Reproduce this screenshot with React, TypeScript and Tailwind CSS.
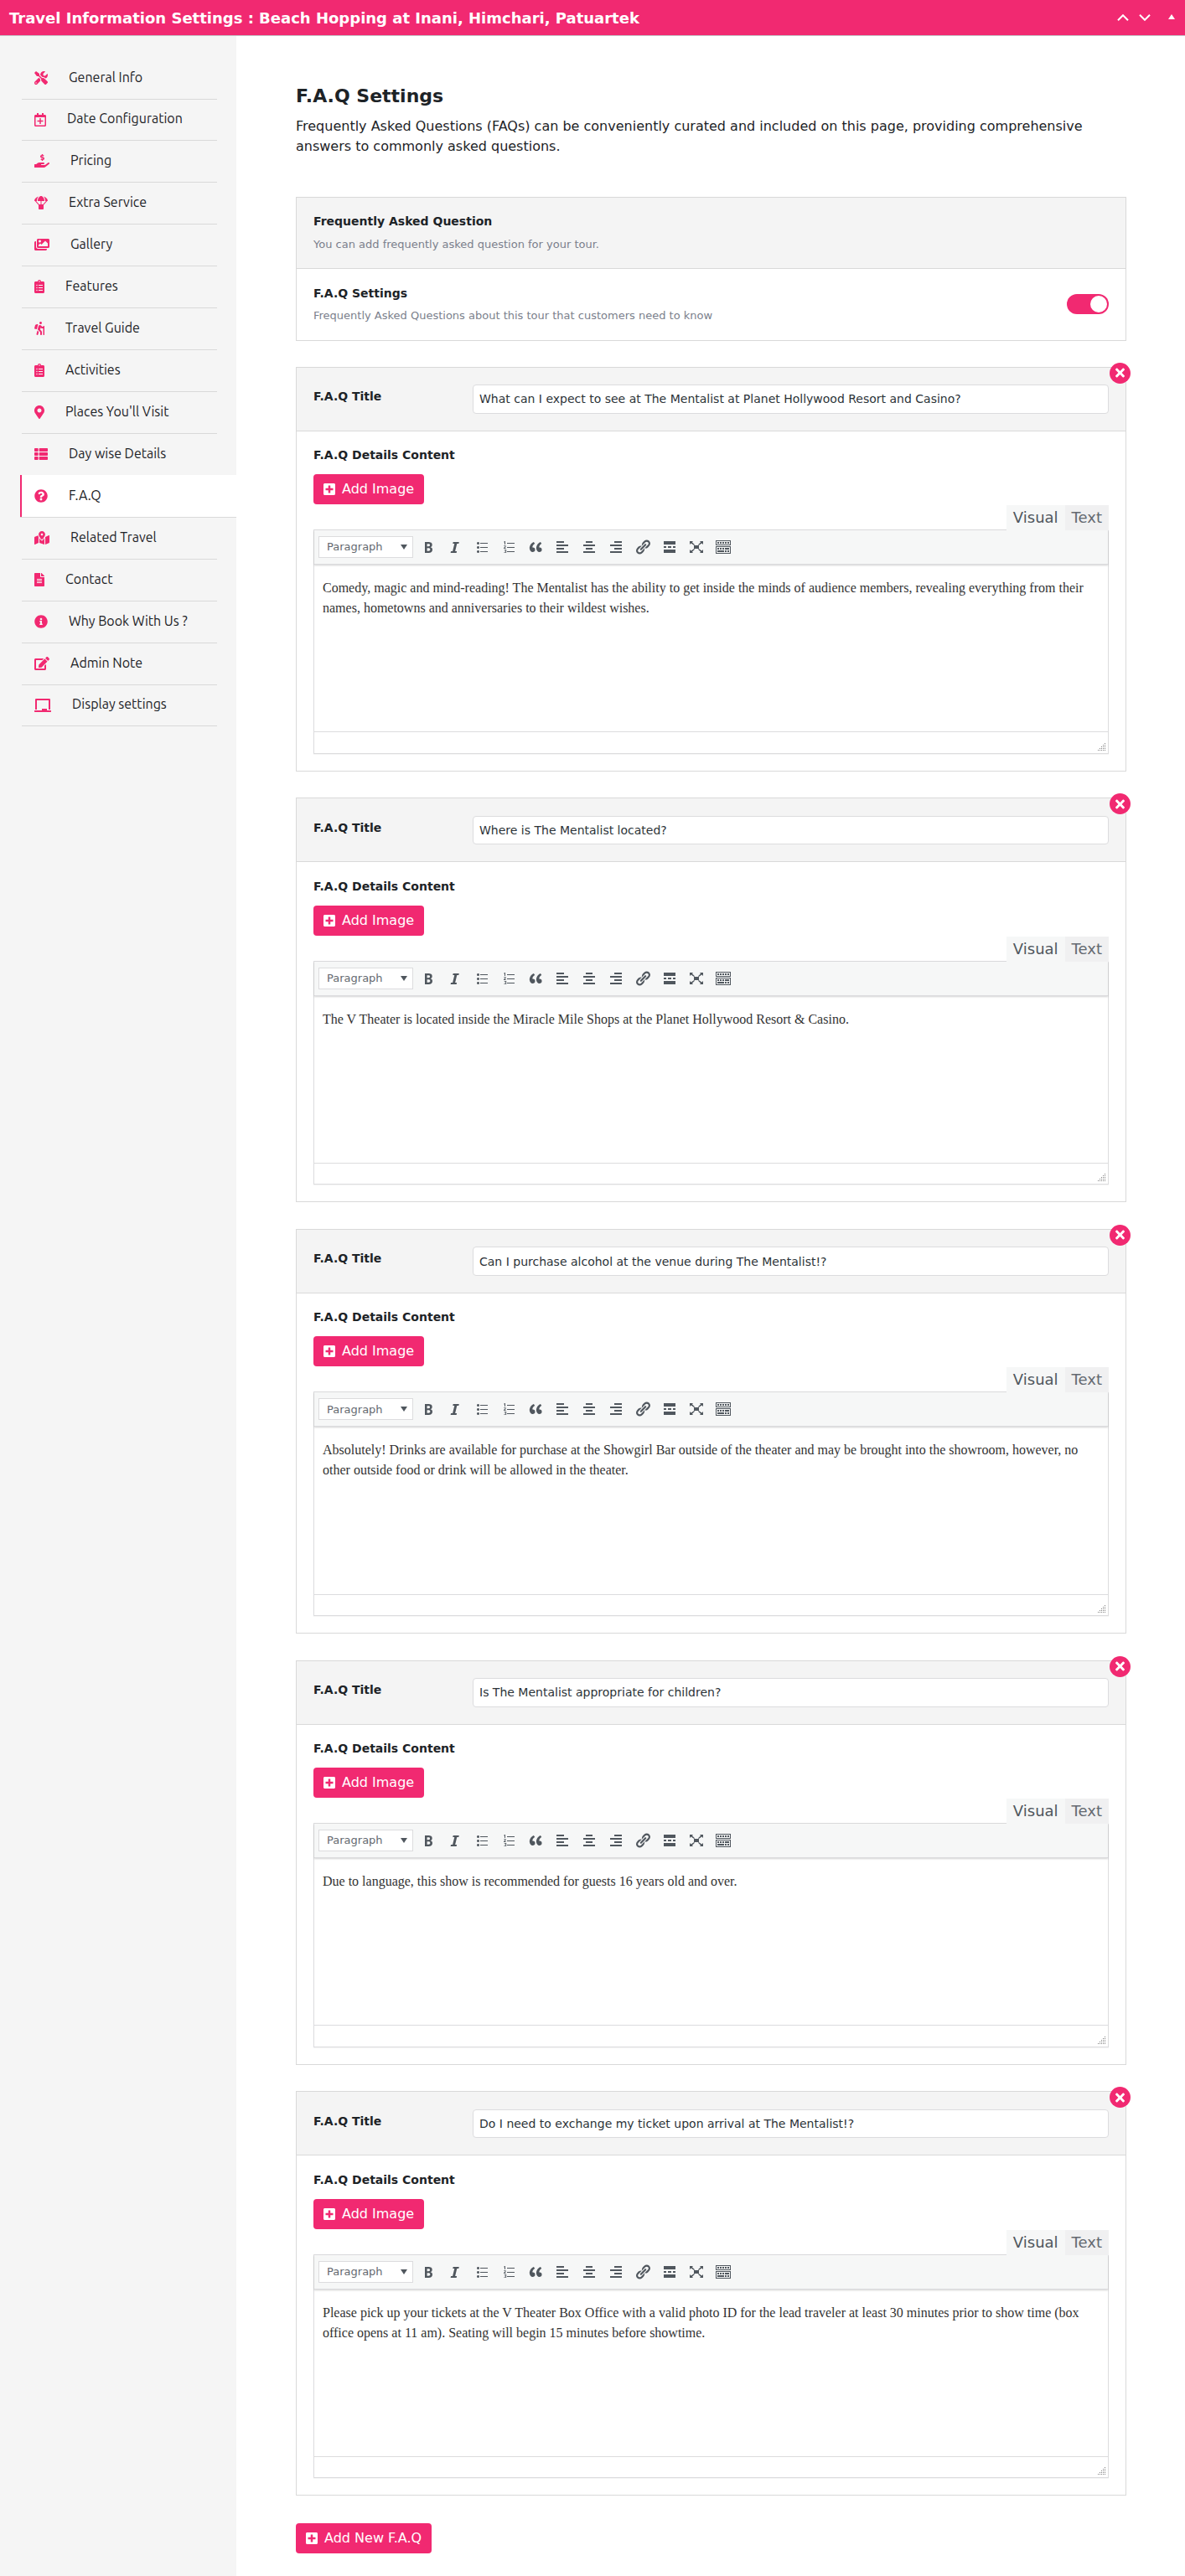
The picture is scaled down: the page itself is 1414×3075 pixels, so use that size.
import type { ReactNode } from "react";
import type { IconType } from "react-icons";
import {
  FaTools, FaRegCalendarPlus, FaHandHoldingUsd, FaParachuteBox, FaImages, FaClipboardList,
  FaHiking, FaMapMarkerAlt, FaThList, FaQuestionCircle, FaMapMarkedAlt, FaFileAlt,
  FaInfoCircle, FaEdit, FaChalkboard, FaPlusSquare, FaTimes,
} from "react-icons/fa";

type Item = { icon: IconType; label: string; w: string; short?: boolean };

const items: Item[] = [
  { icon: FaTools, label: "General Info", w: "w-4" },
  { icon: FaRegCalendarPlus, label: "Date Configuration", w: "w-3.5", short: true },
  { icon: FaHandHoldingUsd, label: "Pricing", w: "w-[18px]" },
  { icon: FaParachuteBox, label: "Extra Service", w: "w-4" },
  { icon: FaImages, label: "Gallery", w: "w-[18px]" },
  { icon: FaClipboardList, label: "Features", w: "w-3" },
  { icon: FaHiking, label: "Travel Guide", w: "w-3" },
  { icon: FaClipboardList, label: "Activities", w: "w-3" },
  { icon: FaMapMarkerAlt, label: "Places You'll Visit", w: "w-3" },
  { icon: FaThList, label: "Day wise Details", w: "w-4" },
  { icon: FaQuestionCircle, label: "F.A.Q", w: "w-4" },
  { icon: FaMapMarkedAlt, label: "Related Travel", w: "w-[18px]" },
  { icon: FaFileAlt, label: "Contact", w: "w-3" },
  { icon: FaInfoCircle, label: "Why Book With Us ?", w: "w-4" },
  { icon: FaEdit, label: "Admin Note", w: "w-[18px]" },
  { icon: FaChalkboard, label: "Display settings", w: "w-5", short: true },
];

const faqs = [
  {
    title: "What can I expect to see at The Mentalist at Planet Hollywood Resort and Casino?",
    body: "Comedy, magic and mind-reading! The Mentalist has the ability to get inside the minds of audience members, revealing everything from their names, hometowns and anniversaries to their wildest wishes.",
  },
  {
    title: "Where is The Mentalist located?",
    body: "The V Theater is located inside the Miracle Mile Shops at the Planet Hollywood Resort & Casino.",
  },
  {
    title: "Can I purchase alcohol at the venue during The Mentalist!?",
    body: "Absolutely! Drinks are available for purchase at the Showgirl Bar outside of the theater and may be brought into the showroom, however, no other outside food or drink will be allowed in the theater.",
  },
  {
    title: "Is The Mentalist appropriate for children?",
    body: "Due to language, this show is recommended for guests 16 years old and over.",
  },
  {
    title: "Do I need to exchange my ticket upon arrival at The Mentalist!?",
    body: "Please pick up your tickets at the V Theater Box Office with a valid photo ID for the lead traveler at least 30 minutes prior to show time (box office opens at 11 am). Seating will begin 15 minutes before showtime.",
  },
];

function Sidebar() {
  return (
    <nav className="w-[282px] shrink-0 bg-[#f5f5f5] pt-[26px] pl-6 font-['Ubuntu','Noto_Sans',sans-serif] text-[#1d2327]">
      {items.map((it, i) => {
        const active = it.label === "F.A.Q";
        const Icon = it.icon;
        return (
          <div
            key={i}
            className={
              "flex items-start border-b border-[#d9d9d9] " +
              (active
                ? "relative -mt-px h-[51px] bg-white pl-[17px] pt-px"
                : it.short
                  ? "ml-0.5 mr-[23px] h-[49px] pl-[15px]"
                  : "ml-0.5 mr-[23px] h-[50px] pl-[15px]")
            }
          >
            {active && <span className="absolute left-0 top-0 h-[50px] w-0.5 bg-[#f12971]" />}
            <Icon className={"mt-4 h-4 shrink-0 text-[#f12971] " + it.w} />
            <span className={"ml-[25px] whitespace-nowrap text-base leading-6 " + (it.short ? "mt-2.5" : "mt-[11px]")}>
              {it.label}
            </span>
          </div>
        );
      })}
    </nav>
  );
}

function Tool({ children }: { children: ReactNode }) {
  return (
    <span className="mr-3 flex h-5 w-5 shrink-0 items-center justify-center">
      <svg viewBox="0 0 20 20" className="h-5 w-5 fill-[#50575e]">{children}</svg>
    </span>
  );
}

function Toolbar() {
  return (
    <div className="relative flex h-[41px] items-center border-b border-[#dcdcde] bg-[#f6f7f7] pl-[5px] shadow-[0_1px_2px_rgba(0,0,0,0.18)]">
      <div className="mr-2 flex h-[26px] w-[113px] shrink-0 items-center justify-between border border-[#dcdcde] bg-white pl-[9px] pr-[6px] text-[13px] text-[#646970]">
        Paragraph
        <svg viewBox="0 0 8 6" className="h-1.5 w-2 fill-[#50575e]"><path d="M0 0h8L4 6z" /></svg>
      </div>
      <Tool><path d="M6 4v13h4.54c1.37 0 2.46-.33 3.26-1 .8-.66 1.2-1.58 1.2-2.77 0-.84-.17-1.51-.51-2.01s-.9-.85-1.67-1.03v-.09c.57-.1 1.02-.4 1.36-.9s.51-1.13.51-1.91c0-1.14-.39-1.98-1.17-2.5C12.75 4.26 11.5 4 9.78 4H6zm2.57 5.15V6.26h1.36c.73 0 1.27.11 1.61.32.34.22.51.58.51 1.07 0 .54-.16.92-.47 1.15s-.82.35-1.51.35h-1.5zm0 2.19h1.6c1.44 0 2.16.53 2.16 1.61 0 .6-.17 1.05-.51 1.34s-.86.43-1.57.43H8.57v-3.38z" /></Tool>
      <Tool><path d="M14.78 4l-.47 2h-2.020l-2.180 9h2.020l-.47 2H4.600l.47-2h2.020l2.180-9H7.250l.47-2z" /></Tool>
      <Tool><path d="M5.5 7C4.67 7 4 6.33 4 5.5 4 4.68 4.67 4 5.5 4 6.32 4 7 4.68 7 5.5 7 6.33 6.32 7 5.5 7zM8 5h9v1H8V5zm-2.500 7c-.83 0-1.500-.67-1.500-1.500C4 9.680 4.670 9 5.500 9c.82 0 1.500.68 1.500 1.500 0 .83-.68 1.500-1.500 1.500zM8 10h9v1H8v-1zm-2.500 7c-.83 0-1.500-.67-1.500-1.500 0-.82.67-1.500 1.500-1.500.82 0 1.500.68 1.500 1.500 0 .83-.68 1.500-1.500 1.500zM8 15h9v1H8v-1z" /></Tool>
      <Tool><path d="M6 7V3h-.69L4 4.020l.4.510.46-.37.18-.16v3H6zm2-2h9v1H8V5zM4 8.600l.35.45c.4-.32.7-.4.95-.4.3 0 .45.15.45.4 0 .4-.4.8-1.650 1.950V12h2.700v-.7H5.200c.9-.8 1.500-1.400 1.500-2.200 0-.7-.5-1.100-1.300-1.100-.5 0-.95.15-1.400.6zM8 10h9v1H8v-1zm-1.400 5c.5-.15.8-.5.8-.95 0-.65-.5-1.050-1.400-1.050-.6 0-1.050.15-1.450.4l.35.6c.3-.2.65-.3.95-.3s.5.15.5.45c0 .35-.3.5-.9.5h-.4v.65h.4c.7 0 1 .15 1 .55 0 .35-.3.55-.8.55-.4 0-.8-.1-1.200-.3v.7c.35.15.8.25 1.300.25 1 0 1.600-.45 1.600-1.150 0-.5-.3-.8-.8-.9zM8 15h9v1H8v-1z" /></Tool>
      <Tool><path d="M9.490 13.220c0-.74-.2-1.380-.61-1.900-.62-.78-1.830-.88-2.530-.72-.29-1.650 1.110-3.750 2.920-4.650L7.880 4c-2.730 1.300-5.420 4.280-4.960 8.050C3.210 14.430 4.590 16 6.540 16c.85 0 1.560-.25 2.120-.75s.83-1.180.83-2.030zm8.050 0c0-.74-.2-1.380-.61-1.900-.63-.78-1.830-.88-2.530-.72-.29-1.650 1.110-3.750 2.920-4.650L15.930 4c-2.730 1.300-5.410 4.280-4.950 8.050.29 2.380 1.660 3.950 3.610 3.950.85 0 1.560-.25 2.120-.75s.83-1.180.83-2.030z" /></Tool>
      <Tool><path d="M12 5V3H3v2h9zm5 4V7H3v2h14zm-5 4v-2H3v2h9zm5 4v-2H3v2h14z" /></Tool>
      <Tool><path d="M14 5V3H6v2h8zm3 4V7H3v2h14zm-3 4v-2H6v2h8zm3 4v-2H3v2h14z" /></Tool>
      <Tool><path d="M17 5V3H8v2h9zm0 4V7H3v2h14zm0 4v-2H8v2h9zm0 4v-2H3v2h14z" /></Tool>
      <Tool><path d="M17.740 2.760c1.680 1.690 1.680 4.410 0 6.100l-1.530 1.520c-1.120 1.120-2.700 1.470-4.140 1.090l2.620-2.610.76-.77.76-.76c.84-.84.84-2.200 0-3.040-.84-.85-2.200-.85-3.040 0l-.77.76-3.380 3.380c-.37-1.440-.02-3.020 1.100-4.140l1.520-1.530c1.690-1.680 4.420-1.680 6.100 0zM8.590 13.430l5.340-5.340c.42-.42.42-1.100 0-1.520-.44-.43-1.130-.39-1.530 0l-5.330 5.340c-.42.42-.42 1.100 0 1.520.44.43 1.130.39 1.520 0zm-.76 2.290l4.140-4.150c.38 1.440.03 3.020-1.090 4.140l-1.520 1.530c-1.690 1.680-4.410 1.680-6.100 0-1.680-1.680-1.680-4.420 0-6.100l1.530-1.520c1.120-1.120 2.700-1.470 4.140-1.100l-4.140 4.150c-.85.84-.85 2.200 0 3.050.84.84 2.200.84 3.040 0z" /></Tool>
      <Tool><path d="M17 7V3H3v4h14zM6 11V9H3v2h3zm6 0V9H8v2h4zm5 0V9h-3v2h3zm0 6v-4H3v4h14z" /></Tool>
      <Tool><path d="M7 8h6v4H7zM2 3h4L4.900 4.200 8 7.200l-.8.8L3.600 5.400 2 7zM18 3h-4l1.100 1.200L12 7.200l.8.8 3.600-2.600L18 7zM2 17h4l-1.100-1.200L8 12.800l-.8-.8-3.600 2.600L2 13zM18 17h-4l1.100-1.200-3.100-3 .8-.8 3.600 2.600L18 13z" /></Tool>
      <Tool><path d="M19 2v6H1V2h18zm-1 5V3H2v4h16zM5 4v2H3V4h2zm3 0v2H6V4h2zm3 0v2H9V4h2zm3 0v2h-2V4h2zm3 0v2h-2V4h2zm2 5v9H1V9h18zm-1 8v-7H2v7h16zM5 11v2H3v-2h2zm3 0v2H6v-2h2zm3 0v2H9v-2h2zm6 0v2h-5v-2h5zm-6 3v2H3v-2h8zm3 0v2h-2v-2h2zm3 0v2h-2v-2h2z" /></Tool>
    </div>
  );
}

function AddButton({ label, width }: { label: string; width: string }) {
  return (
    <button className={"flex h-9 items-center rounded bg-[#f12971] pl-3 text-base text-white " + width}>
      <FaPlusSquare className="mr-2 h-4 w-3.5 shrink-0" />
      <span className="whitespace-nowrap">{label}</span>
    </button>
  );
}

function FaqPanel({ title, body }: { title: string; body: string }) {
  return (
    <section className="relative mb-[31.7px] h-[483px] border border-[#d9d9d9]">
      <button className="absolute -right-[6px] -top-[6px] flex h-[25px] w-[25px] items-center justify-center rounded-full bg-[#f12971]">
        <FaTimes className="h-4 w-[11px] text-white" />
      </button>
      <div className="flex h-[76px] border-b border-[#d9d9d9] bg-[#f4f4f4] pl-5 pr-5">
        <label className="w-[190px] shrink-0 pt-[24.5px] text-sm font-bold leading-5">F.A.Q Title</label>
        <div className="mt-[20.4px] flex h-[34.6px] flex-1 items-center rounded border border-[#dcdcde] bg-white pl-[7px] text-sm text-[#2c3338]">
          {title}
        </div>
      </div>
      <div className="px-5 pt-[18.5px]">
        <h3 className="text-sm font-bold leading-5">F.A.Q Details Content</h3>
        <div className="mt-[13px] h-[37px]"><AddButton label="Add Image" width="w-[132px]" /></div>
        <div className="relative z-10 flex h-[30px] justify-end text-lg leading-[29px]">
          <span className="h-[30px] bg-[#f6f7f7] px-2 text-[#50575e]">Visual</span>
          <span className="h-[30px] bg-[#f0f0f1] px-2 text-[#646970]">Text</span>
        </div>
        <div className="-mt-px h-[267.5px] border border-[#dcdcde] shadow-[0_1px_1px_rgba(0,0,0,0.04)]">
          <Toolbar />
          <div className="h-[199.1px] px-2.5 pt-4 font-['Liberation_Serif',serif] text-base leading-6 text-[#333]">
            {body}
          </div>
          <div className="flex h-[25.4px] items-end justify-end border-t border-[#dcdcde] pb-0.5 pr-0.5">
            <svg viewBox="0 0 10 10" className="h-2.5 w-2.5 fill-[#808080]">
              <path d="M8 0h1v1H8zM6 2h1v1H6zM8 2h1v1H8zM4 4h1v1H4zM6 4h1v1H6zM8 4h1v1H8zM2 6h1v1H2zM4 6h1v1H4zM6 6h1v1H6zM8 6h1v1H8zM0 8h1v1H0zM2 8h1v1H2zM4 8h1v1H4zM6 8h1v1H6zM8 8h1v1H8z" />
            </svg>
          </div>
        </div>
      </div>
    </section>
  );
}

export default function App() {
  return (
    <div className="flex h-[3075px] w-[1414px] flex-col overflow-hidden bg-white font-['DejaVu_Sans',sans-serif] text-[#1d2327]">
      <header className="flex h-[43px] shrink-0 items-center border-b border-[#c3c4c7] bg-[#f12971] pl-[11px] pr-3 text-white">
        <h1 className="flex-1 pt-0.5 text-lg font-bold">Travel Information Settings : Beach Hopping at Inani, Himchari, Patuartek</h1>
        <svg viewBox="0 0 14 8" className="mr-3 h-2 w-3.5 fill-none stroke-white stroke-2"><path d="M1 7.200l6-6 6 6" /></svg>
        <svg viewBox="0 0 14 8" className="mr-[21px] h-2 w-3.5 fill-none stroke-white stroke-2"><path d="M1 .8l6 6 6-6" /></svg>
        <svg viewBox="0 0 8 6" className="mb-0.5 h-1.5 w-2 fill-white"><path d="M0 6h8L4 0z" /></svg>
      </header>
      <div className="flex flex-1">
        <Sidebar />
        <main className="flex-1 pl-[71px] pr-[70px] pt-[58px]">
          <h2 className="text-[22px] font-bold leading-7">F.A.Q Settings</h2>
          <p className="mt-2.5 text-base leading-6">
            Frequently Asked Questions (FAQs) can be conveniently curated and included on this page, providing comprehensive answers to commonly asked questions.
          </p>
          <section className="mt-12 mb-[30.6px] h-[172px] border border-[#d9d9d9]">
            <div className="h-[85px] border-b border-[#d9d9d9] bg-[#f4f4f4] px-5 pt-[18px]">
              <h3 className="text-sm font-bold leading-5">Frequently Asked Question</h3>
              <p className="mt-2 text-[13px] leading-5 text-[#7b7f8c]">You can add frequently asked question for your tour.</p>
            </div>
            <div className="flex justify-between px-5 pt-[19px]">
              <div>
                <h3 className="text-sm font-bold leading-5">F.A.Q Settings</h3>
                <p className="mt-[7px] text-[13px] leading-5 text-[#7b7f8c]">Frequently Asked Questions about this tour that customers need to know</p>
              </div>
              <div className="mt-[11px] flex h-6 w-[50px] items-center justify-end rounded-full bg-[#f12971] pr-0.5">
                <span className="h-5 w-5 rounded-full bg-white" />
              </div>
            </div>
          </section>
          {faqs.map((f) => <FaqPanel key={f.title} title={f.title} body={f.body} />)}
          <div className="pt-px"><AddButton label="Add New F.A.Q" width="w-[162px]" /></div>
        </main>
      </div>
    </div>
  );
}
